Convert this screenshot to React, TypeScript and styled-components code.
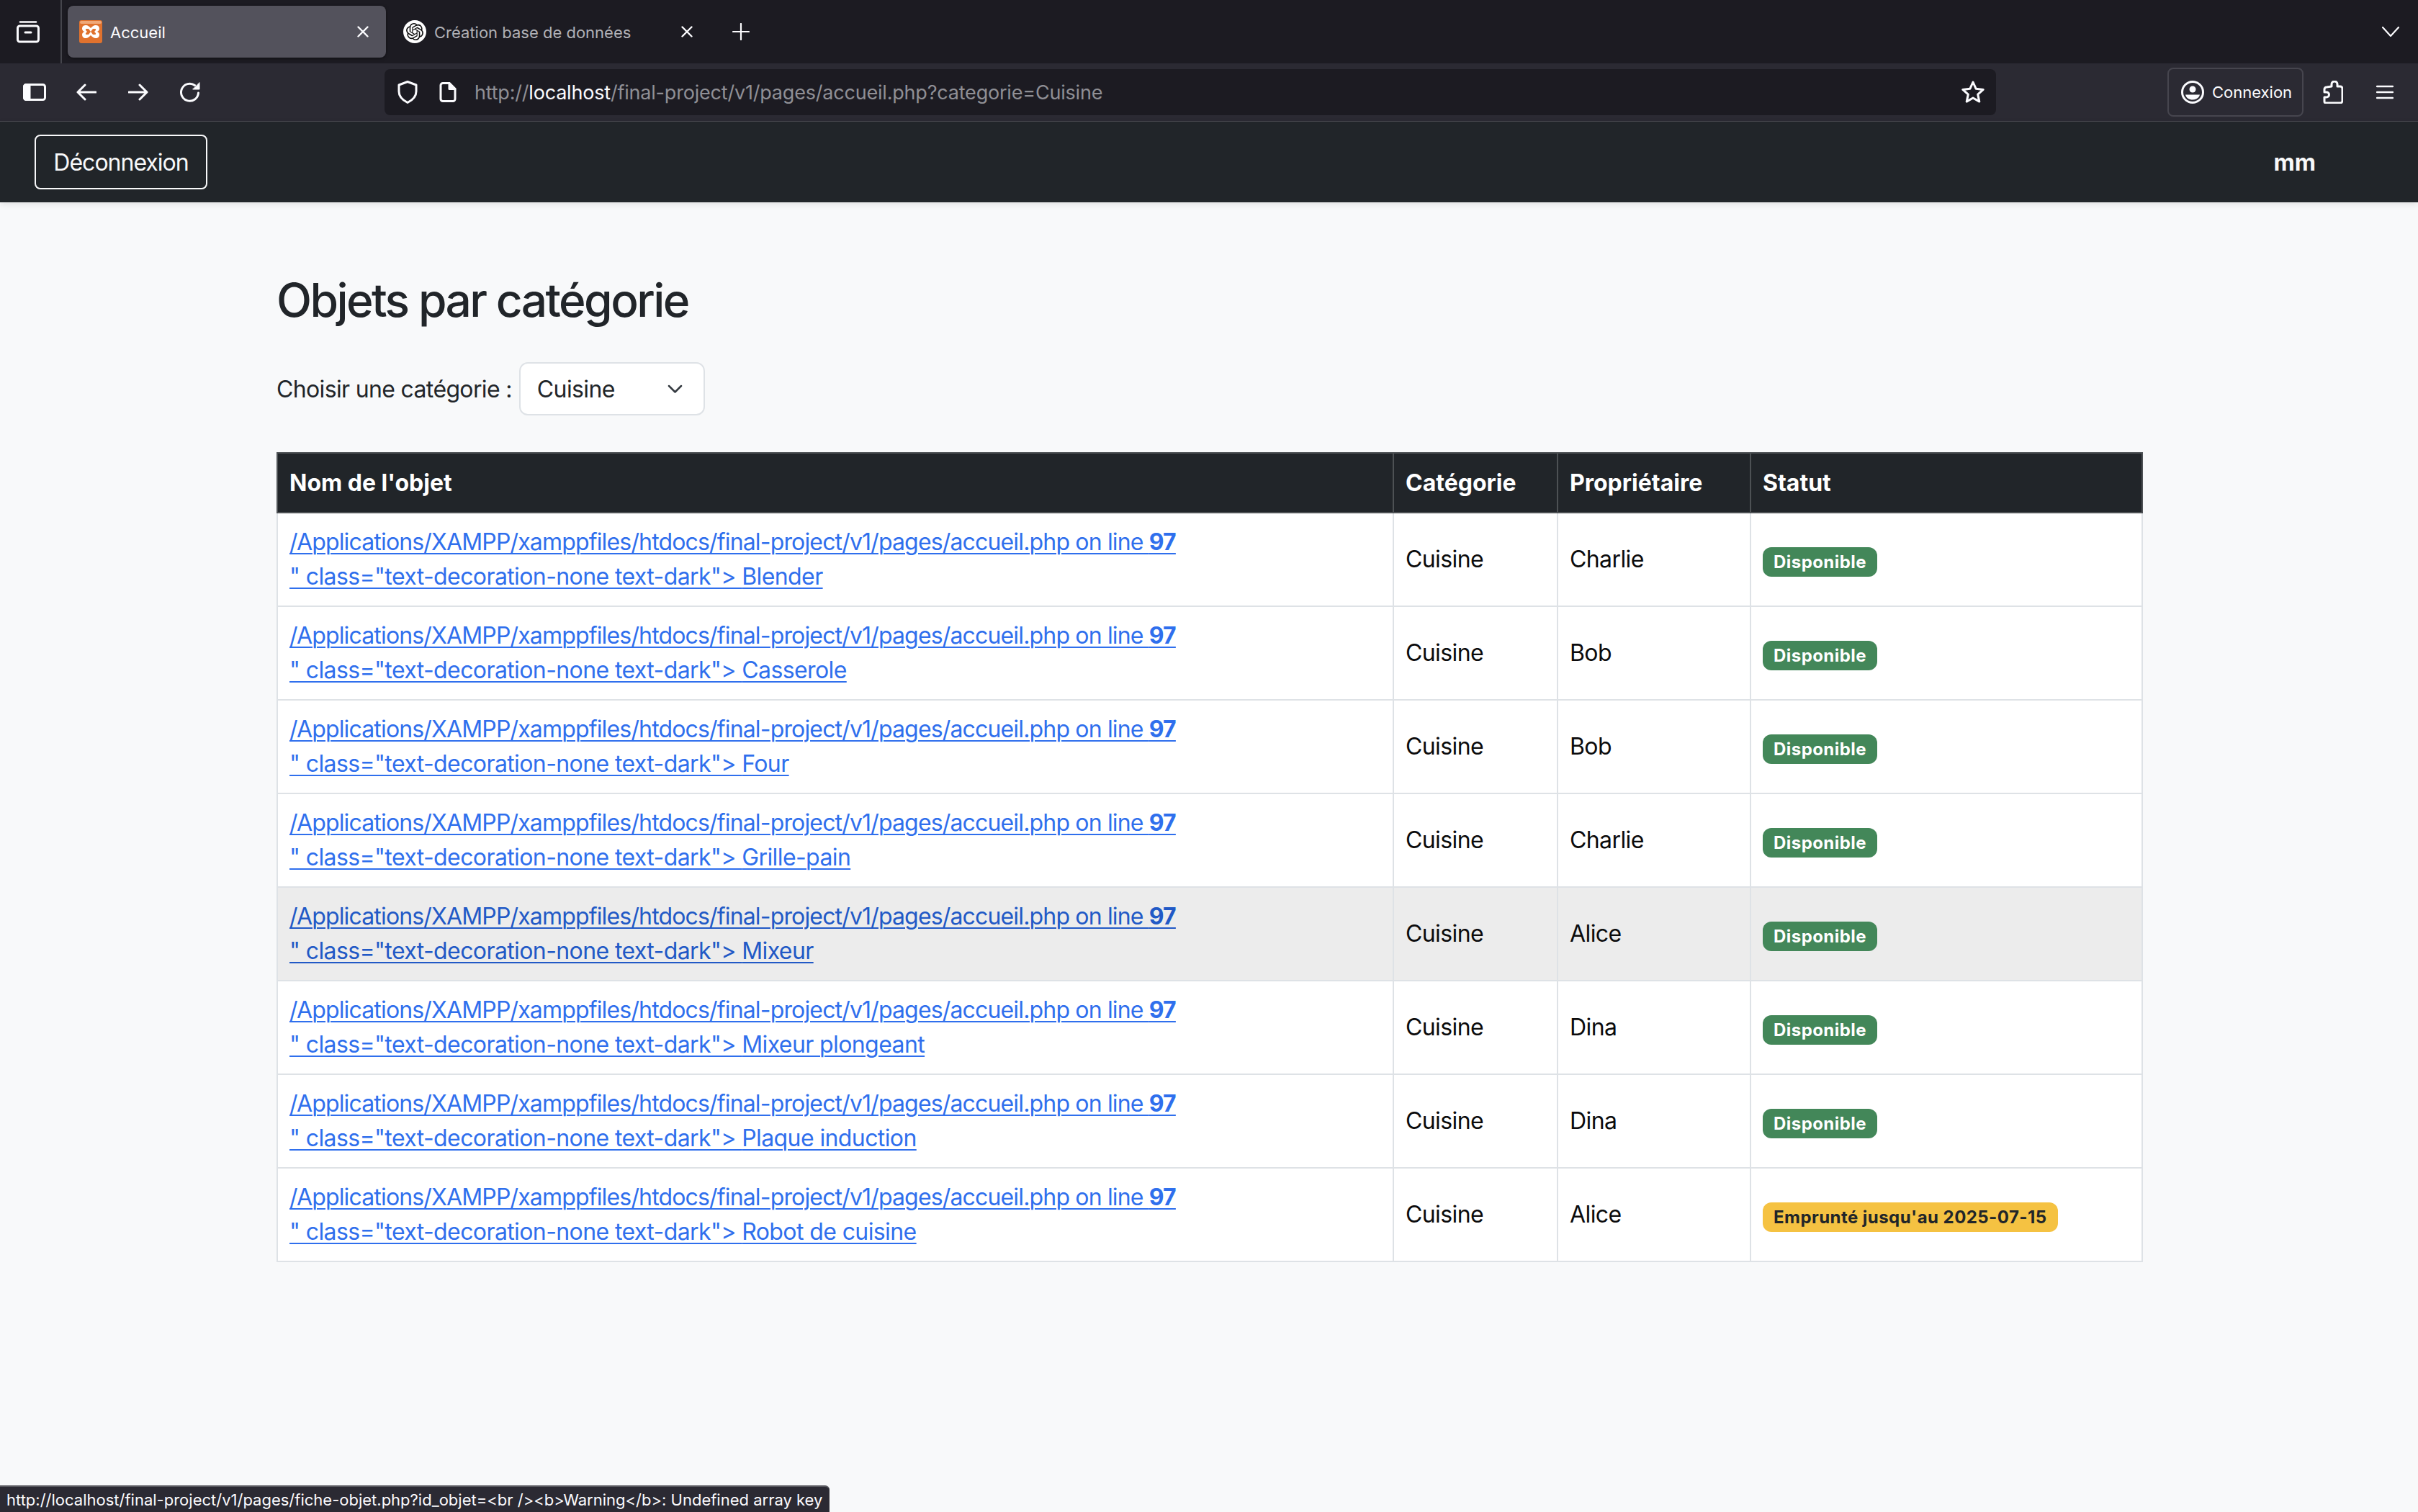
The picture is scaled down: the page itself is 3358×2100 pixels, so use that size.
import styled, { createGlobalStyle } from "styled-components";
import { SiOpenai } from "react-icons/si";

const GlobalStyle = createGlobalStyle`
  html, body {
    margin: 0;
    padding: 0;
    background: #f8f9fa;
  }
  * {
    box-sizing: border-box;
  }
`;

const Page = styled.div`
  font-family: Inter, "Liberation Sans", sans-serif;
  width: 3358px;
  height: 2100px;
  overflow: hidden;
  position: relative;
  display: flex;
  flex-direction: column;
  background: #f8f9fa;
  color: #212529;
`;

/* browser chrome */
const TabStrip = styled.div`
  height: 88px;
  flex: none;
  display: flex;
  background: #1c1b22;
`;

const TabListCell = styled.div`
  width: 86px;
  flex: none;
  display: flex;
  align-items: center;
  justify-content: center;
  padding-right: 6px;
  border-right: 2px solid #45454c;
`;

const Tabs = styled.div`
  display: flex;
  gap: 8px;
  padding: 8px 0 8px 8px;
`;

const Tab = styled.div<{ $active?: boolean }>`
  width: 442px;
  height: 72px;
  display: flex;
  align-items: center;
  padding: 0 24px 0 16px;
  border-radius: 8px;
  background: ${(p) => (p.$active ? "#53525c" : "transparent")};
  box-shadow: ${(p) => (p.$active ? "0 1px 4px rgba(0, 0, 0, 0.5)" : "none")};
`;

const TabTitle = styled.span<{ $active?: boolean }>`
  flex: 1;
  margin-left: 11px;
  padding-top: 2px;
  font-size: 22px;
  color: ${(p) => (p.$active ? "#fbfbfe" : "#b1b1b6")};
  white-space: nowrap;
`;

const Favicon = styled.span`
  width: 32px;
  height: 32px;
  flex: none;
  display: flex;
  align-items: center;
  justify-content: center;
  border-radius: 50%;
  background: #fff;
  color: #111;
`;

const PlusCell = styled.div`
  width: 40px;
  margin: 0 0 0 23px;
  display: flex;
  align-items: center;
  justify-content: center;
`;

const ChevronCell = styled.div`
  margin-left: auto;
  padding: 0 26px 0 0;
  display: flex;
  align-items: center;
`;

const Toolbar = styled.div`
  height: 81px;
  flex: none;
  display: flex;
  align-items: center;
  padding: 0 10px 1px 12px;
  background: #2b2a33;
  border-bottom: 1px solid #4a4950;
`;

const ToolButton = styled.div`
  width: 72px;
  height: 64px;
  flex: none;
  display: flex;
  align-items: center;
  justify-content: center;
`;

const UrlBar = styled.div`
  width: 2238px;
  height: 64px;
  flex: none;
  margin-left: 234px;
  display: flex;
  align-items: center;
  padding: 0 16px 0 18px;
  border-radius: 8px;
  background: #1c1b22;
`;

const UrlText = styled.div`
  flex: 1;
  margin-left: 25px;
  padding-top: 1px;
  font-size: 27px;
  letter-spacing: -0.2px;
  color: #8f8f95;
  white-space: nowrap;
`;

const UrlHost = styled.span`
  color: #fbfbfe;
`;

const AccountButton = styled.div`
  width: 189px;
  height: 68px;
  flex: none;
  margin-left: 238px;
  display: flex;
  align-items: center;
  gap: 11px;
  padding: 1px 0 0 17px;
  border: 2px solid #46454e;
  border-radius: 8px;
  font-size: 22px;
  color: #fbfbfe;
`;

const ActionsGroup = styled.div`
  display: flex;
  margin-left: 5px;
`;

/* site navbar */
const NavBar = styled.nav`
  height: 112px;
  flex: none;
  position: relative;
  display: flex;
  align-items: center;
  justify-content: space-between;
  padding: 0 142px 0 48px;
  background: #212529;
  box-shadow: 0 3px 9px rgba(0, 0, 0, 0.1);
`;

const LogoutButton = styled.button`
  width: 240px;
  height: 76px;
  padding: 0;
  border: 2px solid #f8f9fa;
  border-radius: 8px;
  background: transparent;
  font-family: inherit;
  font-size: 32px;
  letter-spacing: -1px;
  color: #f8f9fa;
`;

const UserName = styled.span`
  font-size: 32px;
  font-weight: 700;
  color: #f8f9fa;
`;

/* page content */
const Main = styled.main`
  flex: 1;
  padding: 97px 382px 0 384px;
`;

const Title = styled.h2`
  margin: 0 0 48px;
  font-size: 64px;
  font-weight: 500;
  line-height: 77px;
  letter-spacing: -2.6px;
`;

const FilterRow = styled.form`
  display: flex;
  align-items: center;
  gap: 10px;
  height: 74px;
  margin-bottom: 51px;
`;

const FilterLabel = styled.label`
  font-size: 32px;
  letter-spacing: -0.65px;
`;

const SelectBox = styled.div`
  width: 258px;
  height: 74px;
  display: flex;
  align-items: center;
  justify-content: space-between;
  padding: 0 29px 0 23px;
  border: 2px solid #dee2e6;
  border-radius: 12px;
  background: #fff;
  font-size: 32px;
  letter-spacing: -0.6px;
`;

const Table = styled.table`
  width: 2590px;
  table-layout: fixed;
  border-collapse: collapse;
  background: #fff;
`;

const HeadCell = styled.th<{ $width: number }>`
  width: ${(p) => p.$width}px;
  height: 83px;
  padding: 0 16px;
  border: 2px solid #4d5154;
  background: #212529;
  color: #fff;
  font-size: 32px;
  font-weight: 700;
  line-height: 48px;
  text-align: left;
`;

const Row = styled.tr<{ $hover?: boolean }>`
  background: ${(p) => (p.$hover ? "#ececec" : "#fff")};
`;

const Cell = styled.td`
  padding: 16px;
  border: 2px solid #dee2e6;
  color: #0b0b0c;
  font-size: 32px;
  line-height: 48px;
  letter-spacing: -0.6px;
  vertical-align: middle;
`;

const ItemLink = styled.a<{ $hover?: boolean }>`
  color: ${(p) => (p.$hover ? "#2159c6" : "#2f6fed")};
  text-decoration: underline;
  text-decoration-thickness: 2px;
  text-underline-offset: 4px;
`;

const WarningPath = styled.span`
  letter-spacing: -0.84px;
`;

const Badge = styled.span<{ $loan?: boolean }>`
  display: inline-block;
  padding: 8px 15px;
  border-radius: 12px;
  background: ${(p) => (p.$loan ? "#f5c242" : "#438759")};
  color: ${(p) => (p.$loan ? "#212529" : "#fff")};
  font-size: 24px;
  font-weight: 700;
  line-height: 25px;
  letter-spacing: 0.45px;
  vertical-align: -1px;
`;

const StatusTip = styled.div`
  position: absolute;
  left: 0;
  bottom: 0;
  width: 1152px;
  height: 37px;
  padding: 3px 0 0 9px;
  background: #2b2a33;
  border-top: 2px solid #5b5b61;
  border-top-right-radius: 6px;
  border-right: 1px solid #3a3a42;
  color: #fbfbfe;
  font-size: 22px;
  line-height: 30px;
  white-space: nowrap;
`;

const Glyph = ({ w, h, children }: { w: number; h: number; children: React.ReactNode }) => (
  <svg
    width={w}
    height={h}
    viewBox={`0 0 ${w} ${h}`}
    fill="none"
    stroke="#fbfbfe"
    strokeWidth="3"
    strokeLinecap="round"
    strokeLinejoin="round"
  >
    {children}
  </svg>
);

const CloseIcon = () => (
  <Glyph w={16} h={16}>
    <path d="M1.5 1.5l13 13M14.5 1.5l-13 13" strokeWidth="2.4" />
  </Glyph>
);

const XamppIcon = () => (
  <svg width="32" height="32" viewBox="0 0 32 32" style={{ flex: "none" }}>
    <rect width="32" height="32" rx="3" fill="#e0722e" />
    <rect x="1" y="1" width="30" height="4" rx="2" fill="#f0a878" />
    <path
      d="M9 7c3 0 5 2 7 4 2-2 4-4 7-4 4 0 5 3 5 5 0 2-2 4-4 4 2 0 4 2 4 4 0 3-2 5-5 5-3 0-5-2-7-4-2 2-4 4-7 4-3 0-5-2-5-5 0-2 2-4 4-4-2 0-4-2-4-4 0-2 1-5 5-5z"
      fill="#fff"
    />
    <path d="M10 12h3l3 4-3 4h-3c-1.500 0-1.500-2 0-3l1-1-1-1c-1.500-1-1.500-3 0-3zM22 12h-3l-3 4 3 4h3c1.500 0 1.500-2 0-3l-1-1 1-1c1.500-1 1.500-3 0-3z" fill="#e0722e" />
  </svg>
);

const rows = [
  { name: "Blender", owner: "Charlie" },
  { name: "Casserole", owner: "Bob" },
  { name: "Four", owner: "Bob" },
  { name: "Grille-pain", owner: "Charlie" },
  { name: "Mixeur", owner: "Alice", hover: true },
  { name: "Mixeur plongeant", owner: "Dina" },
  { name: "Plaque induction", owner: "Dina" },
  { name: "Robot de cuisine", owner: "Alice", until: "2025-07-15" },
];

const App = () => {
  return (
    <Page>
      <GlobalStyle />
      <TabStrip>
        <TabListCell>
          <Glyph w={32} h={32}>
            <path d="M5 2.500h22" strokeWidth="2.600" />
            <rect x="1.500" y="8" width="29" height="22" rx="3" />
            <path d="M12 17h8" />
          </Glyph>
        </TabListCell>
        <Tabs>
          <Tab $active>
            <XamppIcon />
            <TabTitle $active>Accueil</TabTitle>
            <CloseIcon />
          </Tab>
          <Tab>
            <Favicon>
              <SiOpenai size={24} />
            </Favicon>
            <TabTitle>Création base de données</TabTitle>
            <CloseIcon />
          </Tab>
        </Tabs>
        <PlusCell>
          <Glyph w={24} h={24}>
            <path d="M12 1v22M1 12h22" strokeWidth="2.200" />
          </Glyph>
        </PlusCell>
        <ChevronCell>
          <Glyph w={24} h={14}>
            <path d="M1 1l11 12L23 1" strokeWidth="2.200" />
          </Glyph>
        </ChevronCell>
      </TabStrip>

      <Toolbar>
        <ToolButton>
          <Glyph w={32} h={24}>
            <rect x="1.500" y="1.500" width="29" height="21" rx="3" />
            <path d="M1.500 4.500a3 3 0 0 1 3-3H9v21H4.500a3 3 0 0 1-3-3z" fill="#fbfbfe" />
          </Glyph>
        </ToolButton>
        <ToolButton>
          <Glyph w={28} h={24}>
            <path d="M27 12H2M12 2L2 12l10 10" />
          </Glyph>
        </ToolButton>
        <ToolButton>
          <Glyph w={28} h={24}>
            <path d="M1 12h25M16 2l10 10-10 10" />
          </Glyph>
        </ToolButton>
        <ToolButton>
          <Glyph w={28} h={28}>
            <path d="M25.500 15a12 12 0 1 1-5-10.500" />
            <path d="M27 1v9h-9z" fill="#fbfbfe" strokeWidth="1" />
          </Glyph>
        </ToolButton>
        <UrlBar>
          <Glyph w={28} h={32}>
            <path d="M14 1.500l12 4.500v9c0 7-5 12-12 15.500C7 27 2 22 2 15V6z" />
          </Glyph>
          <span style={{ width: 30 }} />
          <Glyph w={24} h={28}>
            <path d="M14 1.500H5a3 3 0 0 0-3 3v19a3 3 0 0 0 3 3h14a3 3 0 0 0 3-3V9.500z" />
            <path d="M14 1.500v8h8z" fill="#fbfbfe" />
          </Glyph>
          <UrlText>
            http://<UrlHost>localhost</UrlHost>/final-project/v1/pages/accueil.php?categorie=Cuisine
          </UrlText>
          <Glyph w={32} h={32}>
            <path d="M16 2l4.200 9.300 10 1.100-7.500 6.700 2.100 10L16 24l-8.800 5.100 2.100-10-7.500-6.700 10-1.100z" />
          </Glyph>
        </UrlBar>
        <AccountButton>
          <Glyph w={32} h={32}>
            <circle cx="16" cy="16" r="14.500" />
            <circle cx="16" cy="12" r="4.500" fill="#fbfbfe" stroke="none" />
            <path d="M6 19.500h20c-1 4.500-5 7-10 7s-9-2.500-10-7z" fill="#fbfbfe" stroke="none" />
          </Glyph>
          Connexion
        </AccountButton>
        <ActionsGroup>
          <ToolButton>
            <Glyph w={28} h={32}>
              <path d="M12 8V5a4 4 0 0 1 8 0v3h4a3 3 0 0 1 3 3v17a3 3 0 0 1-3 3H4a2 2 0 0 1-2-2v-6h3a3.500 3.500 0 0 0 0-7H2v-4a3 3 0 0 1 3-3z" />
            </Glyph>
          </ToolButton>
          <ToolButton>
            <Glyph w={24} h={20}>
              <path d="M1 2h22M1 10h22M1 18h22" strokeWidth="2.400" />
            </Glyph>
          </ToolButton>
        </ActionsGroup>
      </Toolbar>

      <NavBar>
        <LogoutButton>Déconnexion</LogoutButton>
        <UserName>mm</UserName>
      </NavBar>

      <Main>
        <Title>Objets par catégorie</Title>
        <FilterRow>
          <FilterLabel>Choisir une catégorie :</FilterLabel>
          <SelectBox>
            Cuisine
            <svg width="21" height="12" viewBox="0 0 21 12" fill="none" stroke="#343a40" strokeWidth="2.500" strokeLinecap="round" strokeLinejoin="round">
              <path d="M2 2l8.500 8.500L19 2" />
            </svg>
          </SelectBox>
        </FilterRow>
        <Table>
          <thead>
            <tr>
              <HeadCell $width={1550}>Nom de l'objet</HeadCell>
              <HeadCell $width={228}>Catégorie</HeadCell>
              <HeadCell $width={268}>Propriétaire</HeadCell>
              <HeadCell $width={544}>Statut</HeadCell>
            </tr>
          </thead>
          <tbody>
            {rows.map((row) => (
              <Row key={row.name} $hover={row.hover}>
                <Cell>
                  <ItemLink href="#" $hover={row.hover}>
                    <WarningPath>
                      /Applications/XAMPP/xamppfiles/htdocs/final-project/v1/pages/accueil.php on line <b>97</b>
                    </WarningPath>
                    <br />" class="text-decoration-none text-dark"&gt; {row.name}
                  </ItemLink>
                </Cell>
                <Cell>Cuisine</Cell>
                <Cell>{row.owner}</Cell>
                <Cell>
                  {row.until ? (
                    <Badge $loan>Emprunté jusqu'au {row.until}</Badge>
                  ) : (
                    <Badge>Disponible</Badge>
                  )}
                </Cell>
              </Row>
            ))}
          </tbody>
        </Table>
      </Main>

      <StatusTip>
        http://localhost/final-project/v1/pages/fiche-objet.php?id_objet=&lt;br /&gt;&lt;b&gt;Warning&lt;/b&gt;: Undefined array key
      </StatusTip>
    </Page>
  );
};

export default App;
